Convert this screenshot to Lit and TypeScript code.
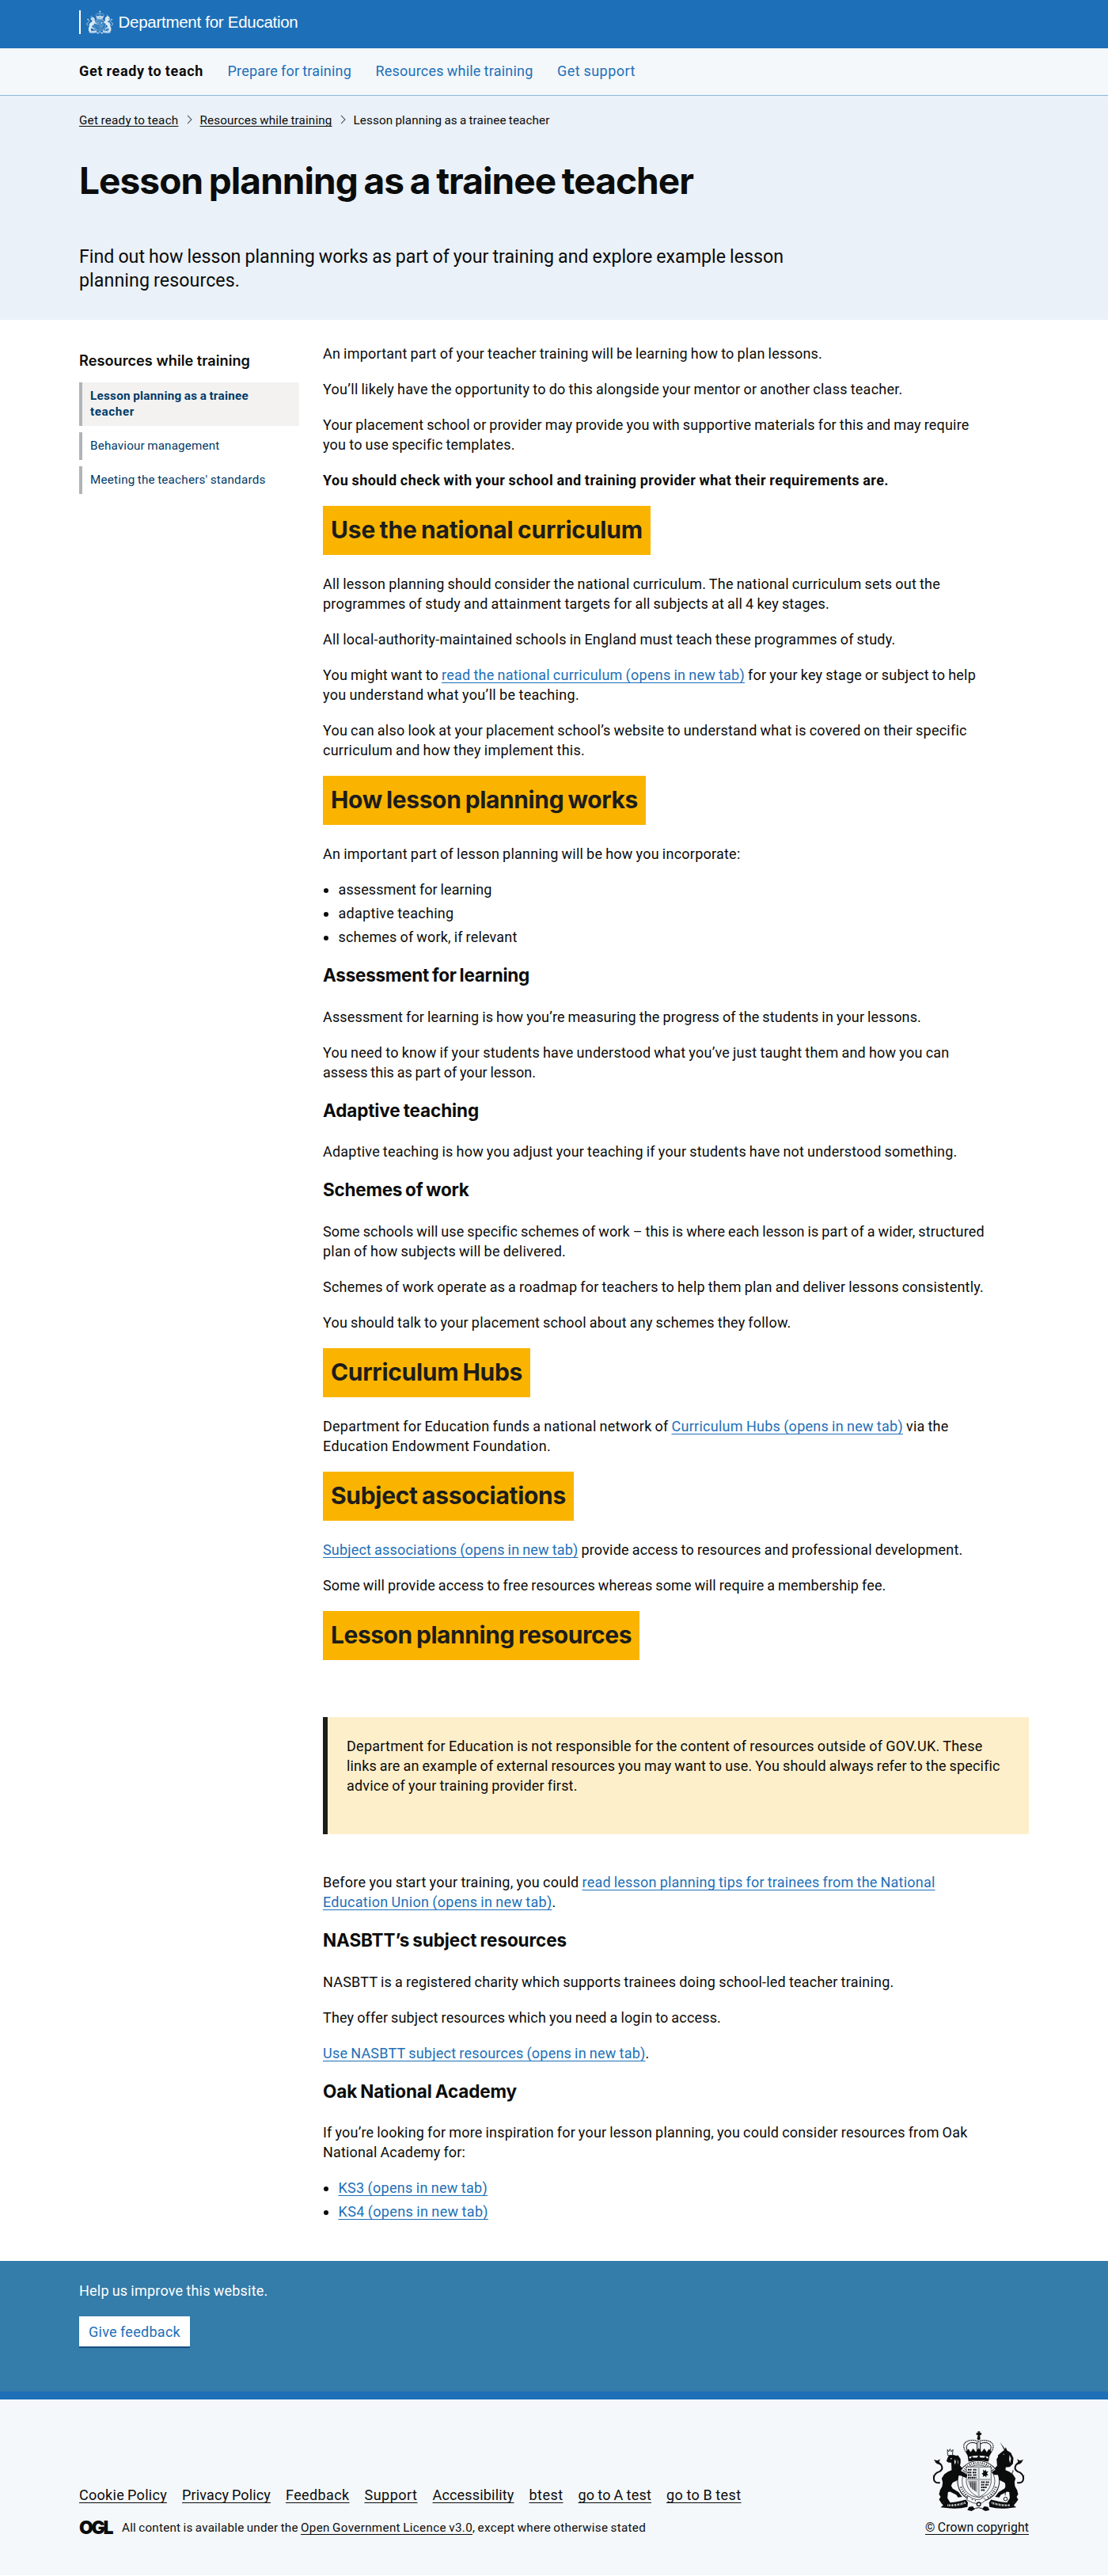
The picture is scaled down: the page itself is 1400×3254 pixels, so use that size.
import { LitElement, html, svg, css, nothing } from "lit";
import { customElement } from "lit/decorators.js";

/** A run of copy set to a given measure, in pixels. */
const run = (text: string, width: number) =>
  html`<span class="run" data-measure=${width}>${text}</span>`;
const link = (text: string, width: number) =>
  html`<a class="link">${run(text, width)}</a>`;

const beast = svg`
  <path d="M182 262 l8 -10 18 -4 10 14 -2 26 14 14 20 14 2 14 -22 -4 -14 2 -8 14 -20 10 -6 12 6 10 22 14 8 10 6 8 -16 2 -6 -10 -24 -12 -8 2 -2 22 8 14 6 8 -22 2 -6 -8 -10 2 -8 -12 6 -10 -6 -10 4 -16 8 -14 2 -16 -4 -14 10 -16 14 -10 14 -6z"/>
  <path d="M140 352 q-24 4 -24 -18 q2 -18 22 -24 q16 -10 6 -26 q-8 -10 -22 -12" fill="none" stroke="currentColor" stroke-width="6"/>
  <path d="M116 264 l14 4 10 -6 -4 12 6 10 -14 -4z M112 322 l8 8 -2 10z"/>`;

const crest = (title: string) => html`<svg class="crest" viewBox="108 153 354 310" role="img" aria-label=${title}>
  <g fill="currentColor">
    <!-- crown -->
    <path d="M283 157 h9 l-1 6 6 -1 v9 l-6 -1 2 9 h-11 l2 -9 -6 1 v-9 l6 1z"/>
    <circle cx="287" cy="184" r="6"/>
    <g fill="none" stroke="currentColor">
      <path d="M246 246 q-34 -42 4 -54 q22 -4 35 4 q16 -8 38 -3 q36 12 4 54" stroke-width="4" stroke-dasharray="3 2"/>
      <path d="M252 244 q-26 -34 4 -44 q16 -2 24 4 M322 244 q26 -34 -4 -44 q-16 -2 -24 4" stroke-width="3"/>
      <path d="M281 198 v38 M293 198 v38" stroke-width="3"/>
      <path d="M287 198 v38" stroke-width="2" stroke-dasharray="2 3"/>
    </g>
    <path d="M238 234 l10 -10 8 12 10 -14 10 14 11 -16 11 16 10 -14 10 14 8 -12 10 10 -8 16 -4 22 q-38 -10 -76 0 l-3 -22z"/>
    <path class="void" d="M250 254 q36 -9 74 0 l-1 6 q-36 -8 -72 0z"/>
    <g><circle cx="262" cy="257" r="4"/><circle cx="287" cy="254" r="5"/><circle cx="312" cy="257" r="4"/></g>
    <!-- supporters -->
    <g>${beast}</g>
    <g transform="translate(573 0) scale(-1 1)">${beast}</g>
    <path d="M168 226 l5 8 5 -10 5 10 6 -8 -2 22 h-18z" fill="none" stroke="currentColor" stroke-width="2.5"/>
    <path d="M166 264 l6 -14 20 -4 16 6 10 20 -4 22 -16 -4 -8 -14 -18 0 -8 -6z"/>
    <path class="void" d="M180 258 l6 2 -5 4z M196 262 l4 10 -3 12 -3 -10z M206 262 l3 12 -2 10z"/>
    <path d="M368 198 l16 32 6 -3 z" opacity=".75"/>
    <path d="M360 248 l14 -12 10 -8 6 -10 5 12 14 8 10 20 -2 22 -12 12 -20 2 4 -20 -16 -8 -12 2z"/>
    <path class="void" d="M380 242 l5 1 -4 3z M404 246 l6 14 -4 18 -3 -14z"/>
    <path class="chain" d="M418 306 l-10 24 -18 24 -2 46"/>
    <circle cx="389" cy="414" r="7" fill="none" stroke="currentColor" stroke-width="3"/>
    <!-- garter and shield -->
    <ellipse cx="286" cy="346" rx="81" ry="79"/>
    <ellipse class="void" cx="286" cy="346" rx="78" ry="76"/>
    <ellipse cx="286" cy="346" rx="62" ry="61" fill="none" stroke="currentColor" stroke-width="2"/>
    <path class="garter" d="M222 322 a68 68 0 0 1 128 0 M220 368 q12 30 34 42 M352 368 q-12 30 -34 42"/>
    <path class="shield" d="M240 292 h94 v60 q-6 36 -47 56 q-41 -20 -47 -56z"/>
    <path class="quarter" d="M246 345 h34 v44 q-28 -16 -34 -44z"/>
    <g class="charge">
      <path d="M246 303 h14 M266 303 h12 M244 313 h16 M264 313 h14 M246 323 h14 M266 323 h12 M246 333 h32"/>
      <path d="M296 350 h14 M314 350 h12 M296 360 h12 M312 360 h12 M296 370 h22 M296 380 h14"/>
    </g>
    <path class="cross" d="M287 292 v114 M240 340 h94"/>
    <path d="M304 302 l6 6 4 -6 2 8 8 -2 -6 8 6 8 -8 0 0 8 -6 -6 -8 4 2 -8 -6 -4 6 -4z"/>
    <path d="M256 352 v18 M264 350 v28 M272 352 v30" fill="none" stroke="currentColor" stroke-width="2"/>
    <!-- paws over the garter -->
    <path d="M204 300 l22 10 18 12 -4 12 -20 -8 -18 -4z M369 300 l-22 4 -10 8 8 10 18 0 10 4z"/>
    <!-- buckle -->
    <path class="void" d="M246 402 q38 26 58 6 l10 10 q-24 28 -72 0z" stroke="currentColor" stroke-width="2"/>
    <g><circle cx="262" cy="416" r="2"/><circle cx="274" cy="420" r="2"/><circle cx="287" cy="434" r="9"/></g>
    <circle class="void" cx="287" cy="434" r="5"/>
    <!-- scroll -->
    <path d="M142 426 l18 2 q38 0 78 -12 l8 12 -2 16 q-36 10 -80 4 l-22 -2 10 -8z"/>
    <path d="M430 426 l-18 2 q-38 0 -78 -12 l-8 12 2 16 q36 10 80 4 l22 -2 -10 -8z"/>
    <path d="M250 444 l14 -2 8 10 -12 8 -16 -4z M322 444 l-14 -2 -8 10 12 8 16 -4z"/>
    <path d="M264 456 q22 -18 44 0" fill="none" stroke="currentColor" stroke-width="3"/>
    <path class="motto" d="M168 438 q34 2 68 -10 M336 428 q34 12 68 10"/>
  </g>
</svg>`;

const chevron = html`<svg class="chevron" viewBox="0 0 8 12" aria-hidden="true">
  <path d="M1 .8 L6 6 L1 11.2" fill="none" stroke="#505a5f" stroke-width="1.1" />
</svg>`;

@customElement("app-root")
export class AppRoot extends LitElement {
  static styles = css`
    :host {
      display: block; background: #fff; color: #0b0c0c;
      font: 18px/25px Roboto, "Liberation Sans", sans-serif; word-spacing: -.04em;
    }
    * { box-sizing: border-box; }
    p, h1, h2, h3, ul { margin: 0; padding: 0; }
    ul { list-style: none; }
    .run { white-space: pre; }
    .wrap { width: 1200px; margin: 0 auto; }
    a { color: inherit; text-decoration: none; }
    .link, .under {
      text-decoration: underline; text-decoration-thickness: 1px;
      text-underline-offset: 3px; text-decoration-skip-ink: none;
    }
    .link { color: #1d70b8; }

    .crest { display: block; color: inherit; }
    .crest .void { fill: var(--ground); }
    .crest .garter { fill: none; stroke: currentColor; stroke-width: 9; stroke-dasharray: 3 5 2 6; }
    .crest .shield { fill: var(--ground); stroke: currentColor; stroke-width: 2; }
    .crest .quarter { fill: #8f9294; }
    .crest .charge { fill: none; stroke: currentColor; stroke-width: 6; stroke-dasharray: 6 1.5; }
    .crest .cross { fill: none; stroke: #b1b4b6; stroke-width: 7; }
    .crest .chain { fill: none; stroke: currentColor; stroke-width: 4; stroke-dasharray: 5 2; }
    .crest .motto { fill: none; stroke: var(--ground); stroke-width: 8; stroke-dasharray: 2 3 4 3; }

    .top { height: 61px; background: #1d70b8; color: #fff; --ground: #1d70b8; }
    .brand { display: flex; align-items: center; padding-top: 13px; }
    .bar { width: 2px; height: 30px; background: #fff; }
    .brand .crest { width: 34px; height: 30px; margin-left: 7px; opacity: .85; }
    .brand .crest .cross, .brand .crest .quarter { stroke: #8fb8dc; fill: none; }
    .dept { margin-left: 6.5px; font: 20.5px/30px "Liberation Sans", Arial, sans-serif; word-spacing: 0; }

    .nav { height: 60px; background: #f4f8fb; border-bottom: 1px solid #8eb8dc; }
    .nav .wrap { display: flex; gap: 30.5px; padding-top: 16px; color: #1d70b8; }
    .here { color: #0b0c0c; font-weight: 700; }

    .hero { height: 283px; background: #eaf1f8; padding-top: 21px; }
    .crumbs { display: flex; align-items: center; font-size: 15.2px; line-height: 20px; }
    .chevron { width: 8px; height: 12px; margin: 0 9px 2px 10px; }
    .crumbs .under { text-underline-offset: 2px; }
    h1, .flag, .body h3 { font-family: Inter, "Liberation Sans", sans-serif; font-weight: 700; word-spacing: -.05em; }
    h1 { margin-top: 41px; font-size: 46px; line-height: 50px; }
    .lede { margin-top: 56px; font-size: 23.2px; line-height: 30px; }

    .columns { display: grid; grid-template-columns: 278px 892px; gap: 30px; padding: 30px 0; }
    .side h2 { margin-top: 9px; font: 600 18.2px/25px Inter, "Liberation Sans", sans-serif; word-spacing: 0; }
    .side ul { display: grid; gap: 8px; margin-top: 15px; }
    .side li {
      padding: 7px 10px 8px; border-left: 4px solid #b1b4b6;
      color: #003a69; font-size: 15.2px; line-height: 20px;
    }
    .side .current { background: #f3f2f1; font-weight: 700; }

    .body p { margin-bottom: 20px; }
    .strong { font-weight: 700; }
    .flag {
      width: fit-content; height: 62px; margin: 20px 0 24px; padding: 0 10px;
      background: #fab400; color: #1d1d1b; font-size: 30px; line-height: 60px;
    }
    .body h3 { margin: 21px 0 24.7px; font-size: 22.5px; line-height: 30px; }
    .bullets { margin-bottom: 20px; }
    .bullets li { display: flex; align-items: center; margin-bottom: 5px; }
    .bullets li:last-child { margin-bottom: 0; }
    .bullets li::before { content: ""; width: 6px; height: 6px; margin: 2px 12.5px 0 1px; border-radius: 50%; background: #0b0c0c; }
    .warning { margin: 72px 0 48px; padding: 24px 24px 49px; border-left: 6px solid #1d1d1b; background: #feefcb; }
    .body .warning p { margin: 0; }

    .feedback { height: 165px; padding-top: 25px; background: #347ca9; color: #fff; }
    .button {
      display: block; width: 140px; height: 38px; margin-top: 20px; padding: 7px 12px 6px;
      background: #fff; color: #1d70b8; box-shadow: 0 2px 0 #1a4f82;
    }
    .footer { height: 232px; border-top: 10px solid #1d70b8; background: #f4f8fb; --ground: #f4f8fb; }
    .footer .wrap { display: flex; justify-content: space-between; align-items: flex-end; height: 172px; }
    .links { display: flex; gap: 19px; margin-bottom: 19px; }
    .licence { display: flex; align-items: center; gap: 13px; font-size: 15.2px; line-height: 20px; }
    .ogl { width: 41px; font: 900 23px/18px Inter, sans-serif; }
    .crown { display: flex; flex-direction: column; align-items: center; font-size: 15.8px; line-height: 20px; }
    .crown .crest { width: 118px; height: 103px; margin: 0 0 10px 3px; }
  `;

  /** Tracks each run of copy so that it fills its measure. */
  firstUpdated() {
    this.renderRoot.querySelectorAll<HTMLElement>(".run").forEach((el) => {
      const natural = el.getBoundingClientRect().width;
      const count = (el.textContent ?? "").length;
      el.style.letterSpacing = `${(Number(el.dataset.measure) - natural) / count}px`;
    });
  }

  private para(lines: Array<unknown>, cls = "") {
    return html`<p class=${cls}>${lines.map((l, i) => html`${i ? html`<br />` : nothing}${l}`)}</p>`;
  }

  render() {
    const p = this.para;
    return html`
      <header class="top"><div class="wrap brand">
        <span class="bar"></span>${crest("Royal coat of arms")}
        <span class="dept">${run("Department for Education", 227)}</span>
      </div></header>
      <nav class="nav"><div class="wrap">
        <a class="here">${run("Get ready to teach", 157)}</a>
        <a>${run("Prepare for training", 156.5)}</a>
        <a>${run("Resources while training", 199)}</a>
        <a>${run("Get support", 99)}</a>
      </div></nav>
      <section class="hero"><div class="wrap">
        <div class="crumbs">
          <a class="under">${run("Get ready to teach", 125.5)}</a>${chevron}
          <a class="under">${run("Resources while training", 167)}</a>${chevron}
          <span>${run("Lesson planning as a trainee teacher", 248)}</span>
        </div>
        <h1>${run("Lesson planning as a trainee teacher", 776)}</h1>
        ${p([
          run("Find out how lesson planning works as part of your training and explore example lesson", 890),
          run("planning resources.", 203),
        ], "lede")}
      </div></section>
      <div class="wrap columns">
        <aside class="side">
          <h2>${run("Resources while training", 216)}</h2>
          <ul>
            <li class="current">${run("Lesson planning as a trainee", 200)}<br />${run("teacher", 56)}</li>
            <li>${run("Behaviour management", 163.5)}</li>
            <li>${run("Meeting the teachers' standards", 221.5)}</li>
          </ul>
        </aside>
        <main class="body">
          ${p([run("An important part of your teacher training will be learning how to plan lessons.", 631)])}
          ${p([run("You’ll likely have the opportunity to do this alongside your mentor or another class teacher.", 732.5)])}
          ${p([
            run("Your placement school or provider may provide you with supportive materials for this and may require", 816.5),
            run("you to use specific templates.", 242),
          ])}
          ${p([run("You should check with your school and training provider what their requirements are.", 715)], "strong")}
          <h2 class="flag">${run("Use the national curriculum", 394)}</h2>
          ${p([
            run("All lesson planning should consider the national curriculum. The national curriculum sets out the", 780),
            run("programmes of study and attainment targets for all subjects at all 4 key stages.", 640),
          ])}
          ${p([run("All local-authority-maintained schools in England must teach these programmes of study.", 723.5)])}
          ${p([
            html`${run("You might want to ", 150)}${link("read the national curriculum (opens in new tab)", 383)}${run(" for your key stage or subject to help", 292)}`,
            run("you understand what you’ll be teaching.", 324),
          ])}
          ${p([
            run("You can also look at your placement school’s website to understand what is covered on their specific", 813),
            run("curriculum and how they implement this.", 331),
          ])}
          <h2 class="flag">${run("How lesson planning works", 388)}</h2>
          ${p([run("An important part of lesson planning will be how you incorporate:", 527.5)])}
          <ul class="bullets">
            <li>${run("assessment for learning", 194)}</li>
            <li>${run("adaptive teaching", 146)}</li>
            <li>${run("schemes of work, if relevant", 226)}</li>
          </ul>
          <h3>${run("Assessment for learning", 261)}</h3>
          ${p([run("Assessment for learning is how you’re measuring the progress of the students in your lessons.", 756)])}
          ${p([
            run("You need to know if your students have understood what you’ve just taught them and how you can", 791.5),
            run("assess this as part of your lesson.", 269),
          ])}
          <h3>${run("Adaptive teaching", 197)}</h3>
          ${p([run("Adaptive teaching is how you adjust your teaching if your students have not understood something.", 801.5)])}
          <h3>${run("Schemes of work", 184.5)}</h3>
          ${p([
            run("Some schools will use specific schemes of work – this is where each lesson is part of a wider, structured", 835),
            run("plan of how subjects will be delivered.", 307),
          ])}
          ${p([run("Schemes of work operate as a roadmap for teachers to help them plan and deliver lessons consistently.", 835)])}
          ${p([run("You should talk to your placement school about any schemes they follow.", 591.5)])}
          <h2 class="flag">${run("Curriculum Hubs", 242)}</h2>
          ${p([
            html`${run("Department for Education funds a national network of ", 440.5)}${link("Curriculum Hubs (opens in new tab)", 292.5)}${run(" via the", 57.5)}`,
            run("Education Endowment Foundation.", 288),
          ])}
          <h2 class="flag">${run("Subject associations", 297)}</h2>
          ${p([html`${link("Subject associations (opens in new tab)", 322.5)}${run(" provide access to resources and professional development.", 486)}`])}
          ${p([run("Some will provide access to free resources whereas some will require a membership fee.", 711.5)])}
          <h2 class="flag">${run("Lesson planning resources", 380)}</h2>
          <div class="warning">
            ${p([
              run("Department for Education is not responsible for the content of resources outside of GOV.UK. These", 803.5),
              run("links are an example of external resources you may want to use. You should always refer to the specific", 825),
              run("advice of your training provider first.", 291),
            ])}
          </div>
          ${p([
            html`${run("Before you start your training, you could ", 327.5)}${link("read lesson planning tips for trainees from the National", 446)}`,
            html`${link("Education Union (opens in new tab)", 289.5)}${run(".", 5)}`,
          ])}
          <h3>${run("NASBTT’s subject resources", 308)}</h3>
          ${p([run("NASBTT is a registered charity which supports trainees doing school-led teacher training.", 721.5)])}
          ${p([run("They offer subject resources which you need a login to access.", 503)])}
          ${p([html`${link("Use NASBTT subject resources (opens in new tab)", 407.5)}${run(".", 5)}`])}
          <h3>${run("Oak National Academy", 245)}</h3>
          ${p([
            run("If you’re looking for more inspiration for your lesson planning, you could consider resources from Oak", 814.5),
            run("National Academy for:", 180),
          ])}
          <ul class="bullets">
            <li>${link("KS3 (opens in new tab)", 188.5)}</li>
            <li>${link("KS4 (opens in new tab)", 189.5)}</li>
          </ul>
        </main>
      </div>
      <section class="feedback"><div class="wrap">
        <p>${run("Help us improve this website.", 238.5)}</p>
        <a class="button">${run("Give feedback", 116)}</a>
      </div></section>
      <footer class="footer"><div class="wrap">
        <div>
          <div class="links">
            ${([
              ["Cookie Policy", 111], ["Privacy Policy", 112], ["Feedback", 80.5], ["Support", 67],
              ["Accessibility", 103], ["btest", 43], ["go to A test", 92.5], ["go to B test", 94.5],
            ] as Array<[string, number]>).map(([t, w]) => html`<a class="under">${run(t, w)}</a>`)}
          </div>
          <div class="licence">
            <span class="ogl">${run("OGL", 41)}</span>
            <span>${run("All content is available under the ", 226)}<a class="under">${run("Open Government Licence v3.0", 217)}</a>${run(", except where otherwise stated", 219)}</span>
          </div>
        </div>
        <div class="crown">
          ${crest("Royal coat of arms of the United Kingdom")}
          <a class="under">${run("© Crown copyright", 131)}</a>
        </div>
      </div></footer>
    `;
  }
}
